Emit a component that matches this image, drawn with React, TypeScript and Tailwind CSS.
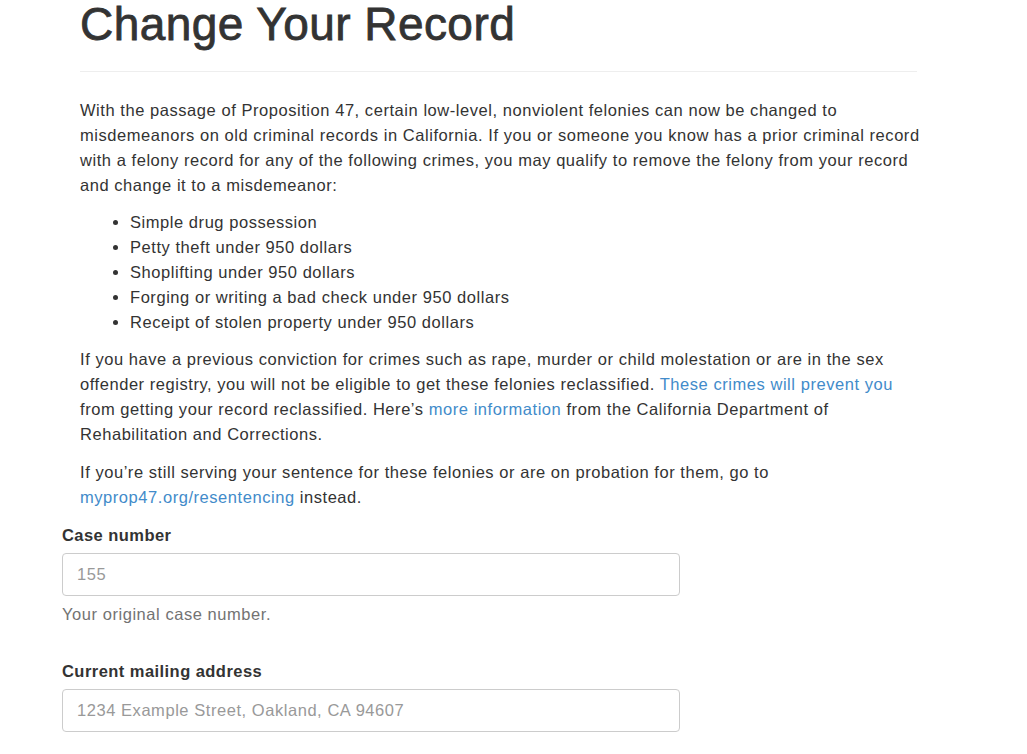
const crimes = [
  "Simple drug possession",
  "Petty theft under 950 dollars",
  "Shoplifting under 950 dollars",
  "Forging or writing a bad check under 950 dollars",
  "Receipt of stolen property under 950 dollars",
]

function Field({ label, placeholder, help }: { label: string; placeholder: string; help?: string }) {
  return (
    <div className="flex flex-col">
      <label className="text-[16.5px] leading-[20px] font-bold tracking-[0.45px] text-[#333]">{label}</label>
      <input
        placeholder={placeholder}
        className="mt-[8px] h-[43px] w-[618px] rounded-[4px] border border-[#ccc] bg-white pl-[14px] text-[16.5px] tracking-[0.55px] text-[#555] placeholder:text-[#999] outline-none"
      />
      {help && <p className="mt-[8px] text-[16.5px] leading-[20px] tracking-[0.55px] text-[#737373]">{help}</p>}
    </div>
  )
}

export default function App() {
  return (
    <div className="min-h-screen bg-white font-['Liberation_Sans',Arial,sans-serif] text-[#333]">
      <div className="ml-[62px] w-[873px]">
        <div className="ml-[18px] w-[837px]">
          <h1 className="text-[46px] leading-[48px] font-normal tracking-[0.45px] [-webkit-text-stroke:0.8px_#333]">
            Change Your Record
          </h1>
          <hr className="mt-[23px] border-0 border-t border-[#eee]" />
          <div className="mt-[26px] text-[16.5px] leading-[25px] tracking-[0.55px] whitespace-nowrap">
            <p>
              With the passage of Proposition 47, certain low-level, nonviolent felonies can now be changed to
              <br />
              misdemeanors on old criminal records in California. If you or someone you know has a prior criminal record
              <br />
              with a felony record for any of the following crimes, you may qualify to remove the felony from your record
              <br />
              and change it to a misdemeanor:
            </p>
            <ul className="mt-[12px] list-disc pl-[50px]">
              {crimes.map((c) => (
                <li key={c}>{c}</li>
              ))}
            </ul>
            <p className="mt-[12px]">
              If you have a previous conviction for crimes such as rape, murder or child molestation or are in the sex
              <br />
              offender registry, you will not be eligible to get these felonies reclassified.{" "}
              <a href="#" className="text-[#428bca]">
                These crimes will prevent you
              </a>
              <br />
              from getting your record reclassified. Here’s{" "}
              <a href="#" className="text-[#428bca]">
                more information
              </a>{" "}
              from the California Department of
              <br />
              Rehabilitation and Corrections.
            </p>
            <p className="mt-[13px]">
              If you’re still serving your sentence for these felonies or are on probation for them, go to
              <br />
              <a href="#" className="text-[#428bca]">
                myprop47.org/resentencing
              </a>{" "}
              instead.
            </p>
          </div>
        </div>
        <form className="mt-[15px] flex flex-col">
          <Field label="Case number" placeholder="155" help="Your original case number." />
          <div className="mt-[37px]">
            <Field label="Current mailing address" placeholder="1234 Example Street, Oakland, CA 94607" />
          </div>
        </form>
      </div>
    </div>
  )
}
